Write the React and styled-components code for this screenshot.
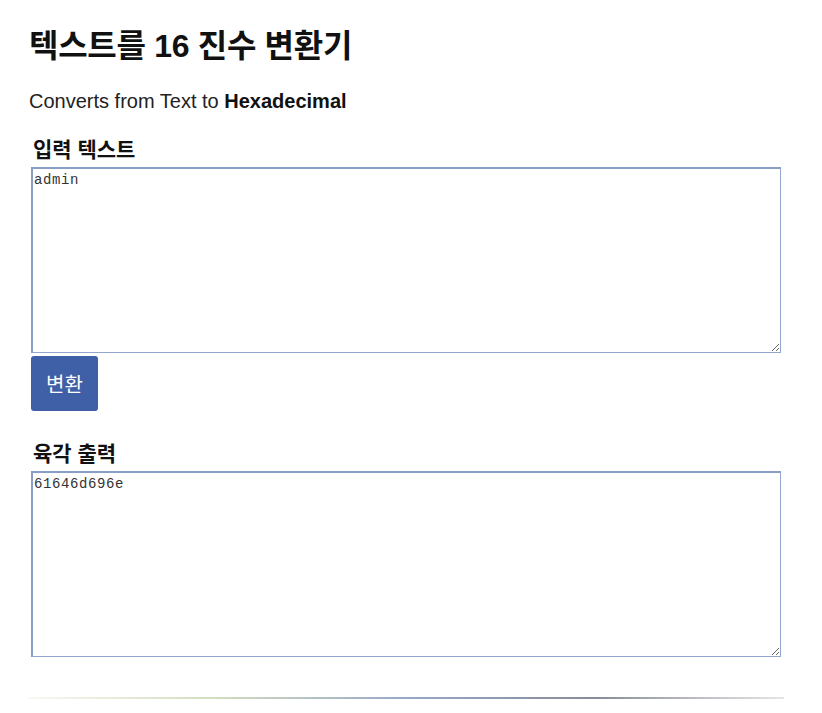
import React, { useState } from "react"
import styled, { createGlobalStyle } from "styled-components"

const GlobalStyle = createGlobalStyle`
  body {
    margin: 0;
    background: #fff;
    color: #111;
    font-family: "Liberation Sans", "Noto Sans CJK KR", Arial, sans-serif;
  }
`

const toHex = (text) =>
  Array.from(new TextEncoder().encode(text))
    .map((b) => b.toString(16).padStart(2, "0"))
    .join("")

const App = () => {
  const [input, setInput] = useState("admin")
  const [output, setOutput] = useState("61646d696e")

  return (
    <Page>
      <GlobalStyle />
      <Title>텍스트를 16 진수 변환기</Title>
      <Subtitle>
        Converts from Text to <b>Hexadecimal</b>
      </Subtitle>
      <Field $gap="23px">
        <Label htmlFor="input">입력 텍스트</Label>
        <Area
          id="input"
          value={input}
          onChange={(e) => setInput(e.target.value)}
        />
      </Field>
      <Button onClick={() => setOutput(toHex(input))}>변환</Button>
      <Field $gap="30px">
        <Label htmlFor="output">육각 출력</Label>
        <Area id="output" value={output} readOnly />
      </Field>
      <Rule />
    </Page>
  )
}

const Page = styled.div`
  width: 756px;
  padding: 26px 0 0 28px;
  display: flex;
  flex-direction: column;
`

const Title = styled.h1`
  margin: 0 0 0 1px;
  font-family: "Liberation Sans", "Noto Sans CJK KR", sans-serif;
  font-size: 32px;
  line-height: 40px;
  font-weight: 700;
  letter-spacing: -0.3px;
`

const Subtitle = styled.p`
  margin: 22px 0 0 1px;
  font-size: 20px;
  line-height: 26px;
  color: #222;
  b {
    color: #111;
  }
`

const Field = styled.div`
  display: flex;
  flex-direction: column;
  gap: 4px;
  margin-top: ${(p) => p.$gap};
  padding-left: 3px;
`

const Label = styled.label`
  margin-left: 2px;
  font-family: "Liberation Sans", "Noto Sans CJK KR", sans-serif;
  font-size: 21px;
  line-height: 26px;
  font-weight: 700;
  color: #111;
`

const Area = styled.textarea`
  box-sizing: border-box;
  width: 750px;
  height: 186px;
  margin: 0;
  padding: 3px 1px;
  border: 1px solid #94a6cd;
  border-left: 2px solid #8a9dc6;
  border-top: 2px solid #8a9dc6;
  font-family: "Liberation Mono", "DejaVu Sans Mono", monospace;
  font-size: 14px;
  line-height: 17px;
  letter-spacing: 0.6px;
  color: #333;
  resize: vertical;
  outline: none;
`

const Button = styled.button`
  align-self: flex-start;
  margin: 3px 0 0 3px;
  width: 67px;
  height: 55px;
  border: none;
  border-radius: 3px;
  background: #3f5fa6;
  color: #fff;
  font-family: "Noto Sans CJK KR", sans-serif;
  font-size: 20px;
  cursor: pointer;
`

const Rule = styled.hr`
  width: 756px;
  height: 2px;
  margin: 40px 0 0 0;
  border: none;
  background: linear-gradient(
    to right,
    #f7f9f2 0%,
    #d2dcbe 25%,
    #97a8c9 50%,
    #878c98 75%,
    #e6e6e6 100%
  );
`

export default App
